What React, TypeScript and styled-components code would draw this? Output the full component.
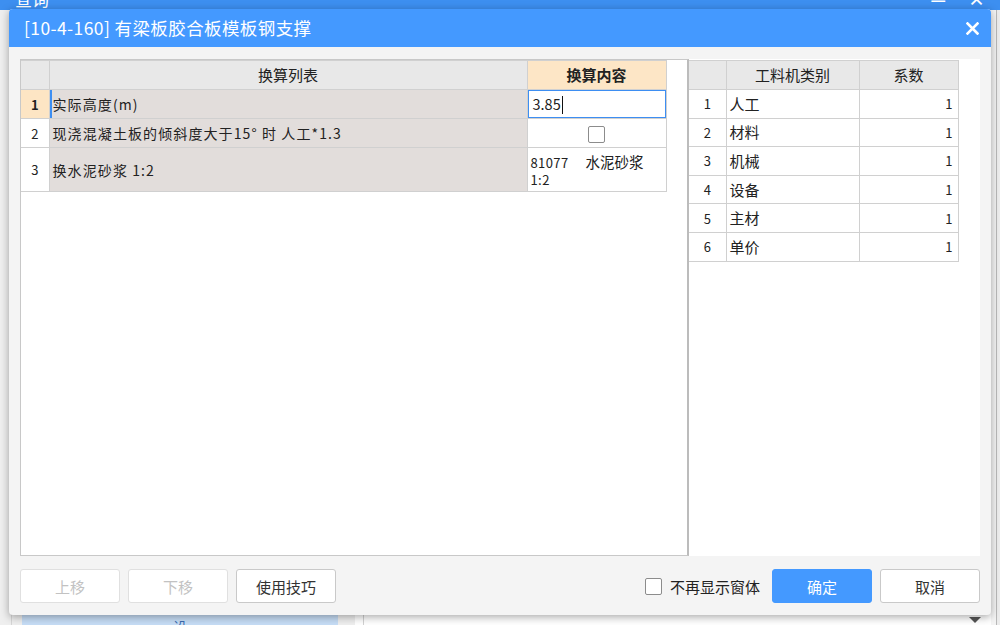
import styled, { createGlobalStyle } from 'styled-components';

const GlobalStyle = createGlobalStyle`
  html, body {
    margin: 0;
    padding: 0;
  }
  body {
    font-family: "Noto Sans CJK SC", "Noto Sans", sans-serif;
    color: #222;
  }
  * {
    box-sizing: border-box;
  }
`;

// ---------- page behind the dialog ----------

const Screen = styled.div`
  position: relative;
  width: 1000px;
  height: 625px;
  overflow: hidden;
  display: flex;
  flex-direction: column;
  background: #fff;
`;

const AppBar = styled.div`
  height: 10px;
  flex-shrink: 0;
  background: #3d8ff0;
  color: #fff;
  display: flex;
  align-items: flex-end;
  justify-content: space-between;
  padding: 0 15px 0 15px;
  overflow: hidden;

  span {
    display: block;
    font-size: 17px;
    line-height: 18px;
    margin-bottom: 2px;
  }
`;

const AppBarIcons = styled.div`
  display: flex;
  gap: 22px;
  align-items: flex-end;
  font-size: 16px;
  font-weight: 700;
`;

const Workspace = styled.div`
  flex: 1;
  display: flex;
`;

const Sidebar = styled.div`
  width: 355px;
  background: #efefef;
  padding-left: 11px;
  display: flex;
`;

const SideList = styled.div`
  flex: 1;
  border-left: 1px solid #d6d6d6;
  padding: 0 17px 0 10px;
  display: flex;
  flex-direction: column;
  justify-content: flex-end;
`;

const SideItem = styled.div`
  height: 11px;
  background: #c6ddf6;
  color: #3a6cb2;
  font-size: 14px;
  line-height: 24px;
  text-align: center;
  overflow: hidden;
`;

const MainArea = styled.div`
  flex: 1;
  margin-left: 8px;
  border-left: 1px solid #d2d2d2;
  background: #fff;
  display: flex;
  justify-content: flex-end;
  align-items: flex-end;
  padding: 0 10px 2px 0;
`;

const DropArrow = styled.div`
  width: 0;
  height: 0;
  border-left: 6px solid transparent;
  border-right: 6px solid transparent;
  border-top: 6px solid #555;
`;

const ScrollStrip = styled.div`
  width: 9px;
  background: #ececec;
  box-shadow: inset 5px 0 0 #f4f4f4, inset 6px 0 0 #b9b9b9;
`;

// ---------- dialog ----------

const Dialog = styled.div`
  position: absolute;
  left: 9px;
  top: 9px;
  width: 982px;
  height: 606px;
  background: #f4f4f4;
  border-radius: 4px;
  box-shadow: 0 2px 8px rgba(0, 0, 0, 0.35);
  display: flex;
  flex-direction: column;
  overflow: hidden;
`;

const TitleBar = styled.div`
  height: 38px;
  flex-shrink: 0;
  background: #4499ff;
  color: #fff;
  display: flex;
  align-items: center;
  justify-content: space-between;
  padding: 0 12px 0 15px;
`;

const Title = styled.div`
  font-size: 17.5px;
  letter-spacing: 0.4px;
  line-height: 20px;
`;

const CloseButton = styled.div`
  width: 13px;
  height: 13px;
  display: flex;
`;

const DialogBody = styled.div`
  flex: 1;
  padding: 12px 11px 0;
  display: flex;
  flex-direction: column;
`;

const Panels = styled.div`
  height: 497px;
  display: flex;
`;

const LeftPanel = styled.div`
  width: 669px;
  background: #fff;
  border: 1px solid #c8c8c8;
  border-right: 2px solid #bcbcbc;
`;

const RightPanel = styled.div`
  flex: 1;
  background: #fff;
  padding-top: 1px;
`;

const Grid = styled.table<{ $width: number }>`
  width: ${p => p.$width}px;
  table-layout: fixed;
  border-collapse: collapse;
`;

const HeadCell = styled.th<{ $accent?: boolean }>`
  height: 29px;
  padding: 0;
  border: 1px solid #d0d0d0;
  background: ${p => (p.$accent ? '#fde6c6' : '#e8e8e8')};
  font-size: 15px;
  font-weight: ${p => (p.$accent ? 700 : 400)};
  color: #222;
  text-align: center;
  line-height: 20px;

  &:first-child {
    border-left: none;
  }
`;

const NumCell = styled.td<{ $selected?: boolean }>`
  padding: 0;
  border: 1px solid #d0d0d0;
  border-left: none;
  background: ${p => (p.$selected ? '#fde5c4' : '#fff')};
  font-size: 13px;
  font-weight: ${p => (p.$selected ? 700 : 400)};
  text-align: center;
  color: #222;
`;

const NameCell = styled.td<{ $active?: boolean; $shaded?: boolean; $large?: boolean }>`
  padding: 0 3px;
  border: 1px solid #d0d0d0;
  background: ${p => (p.$shaded ? '#e2dddb' : '#fff')};
  box-shadow: ${p => (p.$active ? 'inset 2px 0 0 #3d8ef2' : 'none')};
  font-size: ${p => (p.$large ? 15 : 14)}px;
  letter-spacing: ${p => (p.$large ? 0 : 1.1)}px;
  line-height: 18px;
  color: #222;
  white-space: nowrap;
  overflow: hidden;
`;

const ValueCell = styled.td<{ $editing?: boolean; $center?: boolean }>`
  padding: 0 5px;
  border: 1px solid #d0d0d0;
  background: #fff;
  box-shadow: ${p => (p.$editing ? 'inset 0 0 0 1px #3d8ef2' : 'none')};
  font-size: 14.5px;
  line-height: 18px;
  text-align: ${p => (p.$center ? 'center' : 'left')};
  vertical-align: middle;
`;

const NumberCell = styled.td`
  padding: 0 5px;
  border: 1px solid #d0d0d0;
  font-size: 13px;
  text-align: right;
`;

const BodyRow = styled.tr<{ $height: number }>`
  height: ${p => p.$height}px;
`;

const Caret = styled.span`
  display: inline-block;
  width: 1px;
  height: 18px;
  margin-left: 1px;
  background: #111;
  vertical-align: -4px;
`;

const CheckBox = styled.span`
  display: inline-block;
  width: 17px;
  height: 17px;
  border: 1px solid #8c8c8c;
  border-radius: 2px;
  background: #fff;
  vertical-align: middle;
`;

const MixedText = styled.div`
  font-size: 13px;
  letter-spacing: 0.4px;
  line-height: 17px;
  padding: 2px 0 0 0;

  span {
    font-size: 14.5px;
    letter-spacing: 0;
    margin-left: 17px;
  }
`;

const Footer = styled.div`
  height: 34px;
  margin-top: 13px;
  display: flex;
  align-items: center;
  gap: 8px;
`;

const Spacer = styled.div`
  flex: 1;
`;

const Button = styled.button<{ $primary?: boolean }>`
  width: 100px;
  height: 34px;
  border-radius: 3px;
  border: 1px solid ${p => (p.$primary ? '#4499ff' : '#c9c9c9')};
  background: ${p => (p.$primary ? '#4499ff' : '#fff')};
  color: ${p => (p.$primary ? '#fff' : '#333')};
  font-family: inherit;
  font-size: 15px;
  padding: 0;
  cursor: pointer;

  &:disabled {
    border-color: #e0e0e0;
    color: #c2c2c2;
    cursor: default;
  }
`;

const CheckLabel = styled.label`
  display: flex;
  align-items: center;
  gap: 8px;
  font-size: 15px;
  color: #222;
  margin-right: 4px;
`;

const conversions = [
  { id: 1, name: '实际高度(m)' },
  { id: 2, name: '现浇混凝土板的倾斜度大于15° 时 人工*1.3' },
  { id: 3, name: '换水泥砂浆 1:2' },
];

const categories = ['人工', '材料', '机械', '设备', '主材', '单价'];

export default function App() {
  return (
    <>
      <GlobalStyle />
      <Screen>
        <AppBar>
          <span>查询</span>
          <AppBarIcons>
            <span>—</span>
            <span>×</span>
          </AppBarIcons>
        </AppBar>
        <Workspace>
          <Sidebar>
            <SideList>
              <SideItem>设</SideItem>
            </SideList>
          </Sidebar>
          <MainArea>
            <DropArrow />
          </MainArea>
          <ScrollStrip />
        </Workspace>

        <Dialog>
          <TitleBar>
            <Title>[10-4-160] 有梁板胶合板模板钢支撑</Title>
            <CloseButton>
              <svg width="13" height="13" viewBox="0 0 13 13">
                <path d="M1.5 1.5 L11.5 11.5 M11.5 1.5 L1.5 11.5" stroke="#fff" strokeWidth="2.6" strokeLinecap="square" />
              </svg>
            </CloseButton>
          </TitleBar>

          <DialogBody>
            <Panels>
              <LeftPanel>
                <Grid $width={645}>
                  <colgroup>
                    <col style={{ width: 28 }} />
                    <col style={{ width: 478 }} />
                    <col style={{ width: 139 }} />
                  </colgroup>
                  <thead>
                    <tr>
                      <HeadCell />
                      <HeadCell>换算列表</HeadCell>
                      <HeadCell $accent>换算内容</HeadCell>
                    </tr>
                  </thead>
                  <tbody>
                    <BodyRow $height={29}>
                      <NumCell $selected>{conversions[0].id}</NumCell>
                      <NameCell $shaded $active>{conversions[0].name}</NameCell>
                      <ValueCell $editing>
                        3.85<Caret />
                      </ValueCell>
                    </BodyRow>
                    <BodyRow $height={29}>
                      <NumCell>{conversions[1].id}</NumCell>
                      <NameCell $shaded>{conversions[1].name}</NameCell>
                      <ValueCell $center>
                        <CheckBox />
                      </ValueCell>
                    </BodyRow>
                    <BodyRow $height={44}>
                      <NumCell>{conversions[2].id}</NumCell>
                      <NameCell $shaded>{conversions[2].name}</NameCell>
                      <ValueCell style={{ padding: '0 3px' }}>
                        <MixedText>
                          81077<span>水泥砂浆</span>
                          <br />
                          1:2
                        </MixedText>
                      </ValueCell>
                    </BodyRow>
                  </tbody>
                </Grid>
              </LeftPanel>

              <RightPanel>
                <Grid $width={269}>
                  <colgroup>
                    <col style={{ width: 37 }} />
                    <col style={{ width: 133 }} />
                    <col style={{ width: 99 }} />
                  </colgroup>
                  <thead>
                    <tr>
                      <HeadCell />
                      <HeadCell>工料机类别</HeadCell>
                      <HeadCell>系数</HeadCell>
                    </tr>
                  </thead>
                  <tbody>
                    {categories.map((c, i) => (
                      <BodyRow key={c} $height={28.6}>
                        <NumCell>{i + 1}</NumCell>
                        <NameCell $large>{c}</NameCell>
                        <NumberCell>1</NumberCell>
                      </BodyRow>
                    ))}
                  </tbody>
                </Grid>
              </RightPanel>
            </Panels>

            <Footer>
              <Button disabled>上移</Button>
              <Button disabled>下移</Button>
              <Button>使用技巧</Button>
              <Spacer />
              <CheckLabel>
                <CheckBox />
                不再显示窗体
              </CheckLabel>
              <Button $primary>确定</Button>
              <Button>取消</Button>
            </Footer>
          </DialogBody>
        </Dialog>
      </Screen>
    </>
  );
}
